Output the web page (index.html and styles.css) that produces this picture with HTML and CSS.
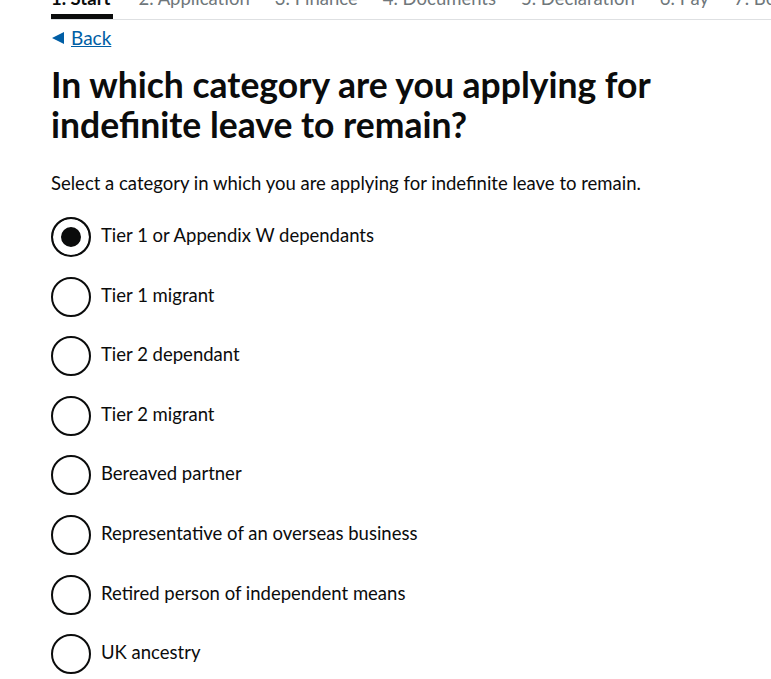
FILE: index.html
```html
<!DOCTYPE html>
<html lang="en">
<head>
  <meta charset="UTF-8">
  <meta name="viewport" content="width=device-width, initial-scale=1.0">
  <title>Apply for indefinite leave to remain</title>
  <link rel="stylesheet" href="styles.css">
</head>
<body>

  <!-- Step navigation -->
  <div class="steps">
    <a class="step active" href="#">1. Start</a>
    <a class="step" href="#">2. Application</a>
    <a class="step" href="#">3. Finance</a>
    <a class="step" href="#">4. Documents</a>
    <a class="step" href="#">5. Declaration</a>
    <a class="step" href="#">6. Pay</a>
    <a class="step" href="#">7. Book appointment</a>
  </div>

  <main class="main">
    <a class="back-link" href="#">Back</a>

    <form class="question">
      <fieldset>
        <legend>
          <h1>In which category are you applying for indefinite leave to remain?</h1>
        </legend>
        <p class="hint">Select a category in which you are applying for indefinite leave to remain.</p>

        <div class="radios">
          <label class="radio"><input type="radio" name="category" value="tier1-dependants" checked><span>Tier 1 or Appendix W dependants</span></label>
          <label class="radio"><input type="radio" name="category" value="tier1-migrant"><span>Tier 1 migrant</span></label>
          <label class="radio"><input type="radio" name="category" value="tier2-dependant"><span>Tier 2 dependant</span></label>
          <label class="radio"><input type="radio" name="category" value="tier2-migrant"><span>Tier 2 migrant</span></label>
          <label class="radio"><input type="radio" name="category" value="bereaved"><span>Bereaved partner</span></label>
          <label class="radio"><input type="radio" name="category" value="representative"><span>Representative of an overseas business</span></label>
          <label class="radio"><input type="radio" name="category" value="retired"><span>Retired person of independent means</span></label>
          <label class="radio"><input type="radio" name="category" value="ancestry"><span>UK ancestry</span></label>
        </div>
      </fieldset>
    </form>
  </main>

</body>
</html>
```

FILE: styles.css
```css
/* General Styles */
body {
  font-family: Lato, "Liberation Sans", Arial, sans-serif;
  color: #0b0c0c;
  background-color: #fff;
  margin: 0;
  padding: 0;
  overflow: hidden;
}

.steps {
  display: flex;
  gap: 25px;
  margin: -14px 0 0 51px;
  border-bottom: 1px solid #dee0e2;
  white-space: nowrap;
  overflow: hidden;
}

.step {
  font-size: 18.5px;
  line-height: 25px;
  color: #6f777b;
  text-decoration: none;
  padding-bottom: 3px;
  border-bottom: 5px solid transparent;
}

.step.active {
  color: #0b0c0c;
  font-weight: bold;
  border-bottom-color: #0b0c0c;
  padding-right: 3px;
}

/* Main content */
.main {
  padding: 5px 20px 0 51px;
}

.back-link {
  display: inline-flex;
  align-items: center;
  gap: 7px;
  font-size: 19px;
  line-height: 25px;
  color: #005ea5;
}

.back-link::before {
  content: "";
  width: 0;
  height: 0;
  border-style: solid;
  border-width: 6.5px 12px 6.5px 0;
  border-color: transparent #005ea5 transparent transparent;
  margin-left: 1px;
}

fieldset {
  border: none;
  margin: 0;
  padding: 0;
}

legend {
  padding: 0;
}

h1 {
  font-size: 35.5px;
  line-height: 40px;
  font-weight: bold;
  margin: 15px 0 26px;
  max-width: 640px;
}

.hint {
  font-size: 18.5px;
  line-height: 25px;
  margin: 0 0 21px;
}

/* Radios */
.radios {
  display: flex;
  flex-direction: column;
  gap: 19.6px;
}

.radio {
  display: flex;
  align-items: flex-start;
  gap: 10px;
  min-height: 40px;
  cursor: pointer;
}

.radio input {
  appearance: none;
  -webkit-appearance: none;
  width: 40px;
  height: 40px;
  margin: 0;
  border: 2px solid #0b0c0c;
  border-radius: 50%;
  background-color: #fff;
  flex-shrink: 0;
  cursor: pointer;
}

.radio input:checked {
  background-color: #0b0c0c;
  box-shadow: inset 0 0 0 8px #fff;
}

.radio span {
  font-size: 18.5px;
  line-height: 25px;
  padding-top: 6px;
}
```
